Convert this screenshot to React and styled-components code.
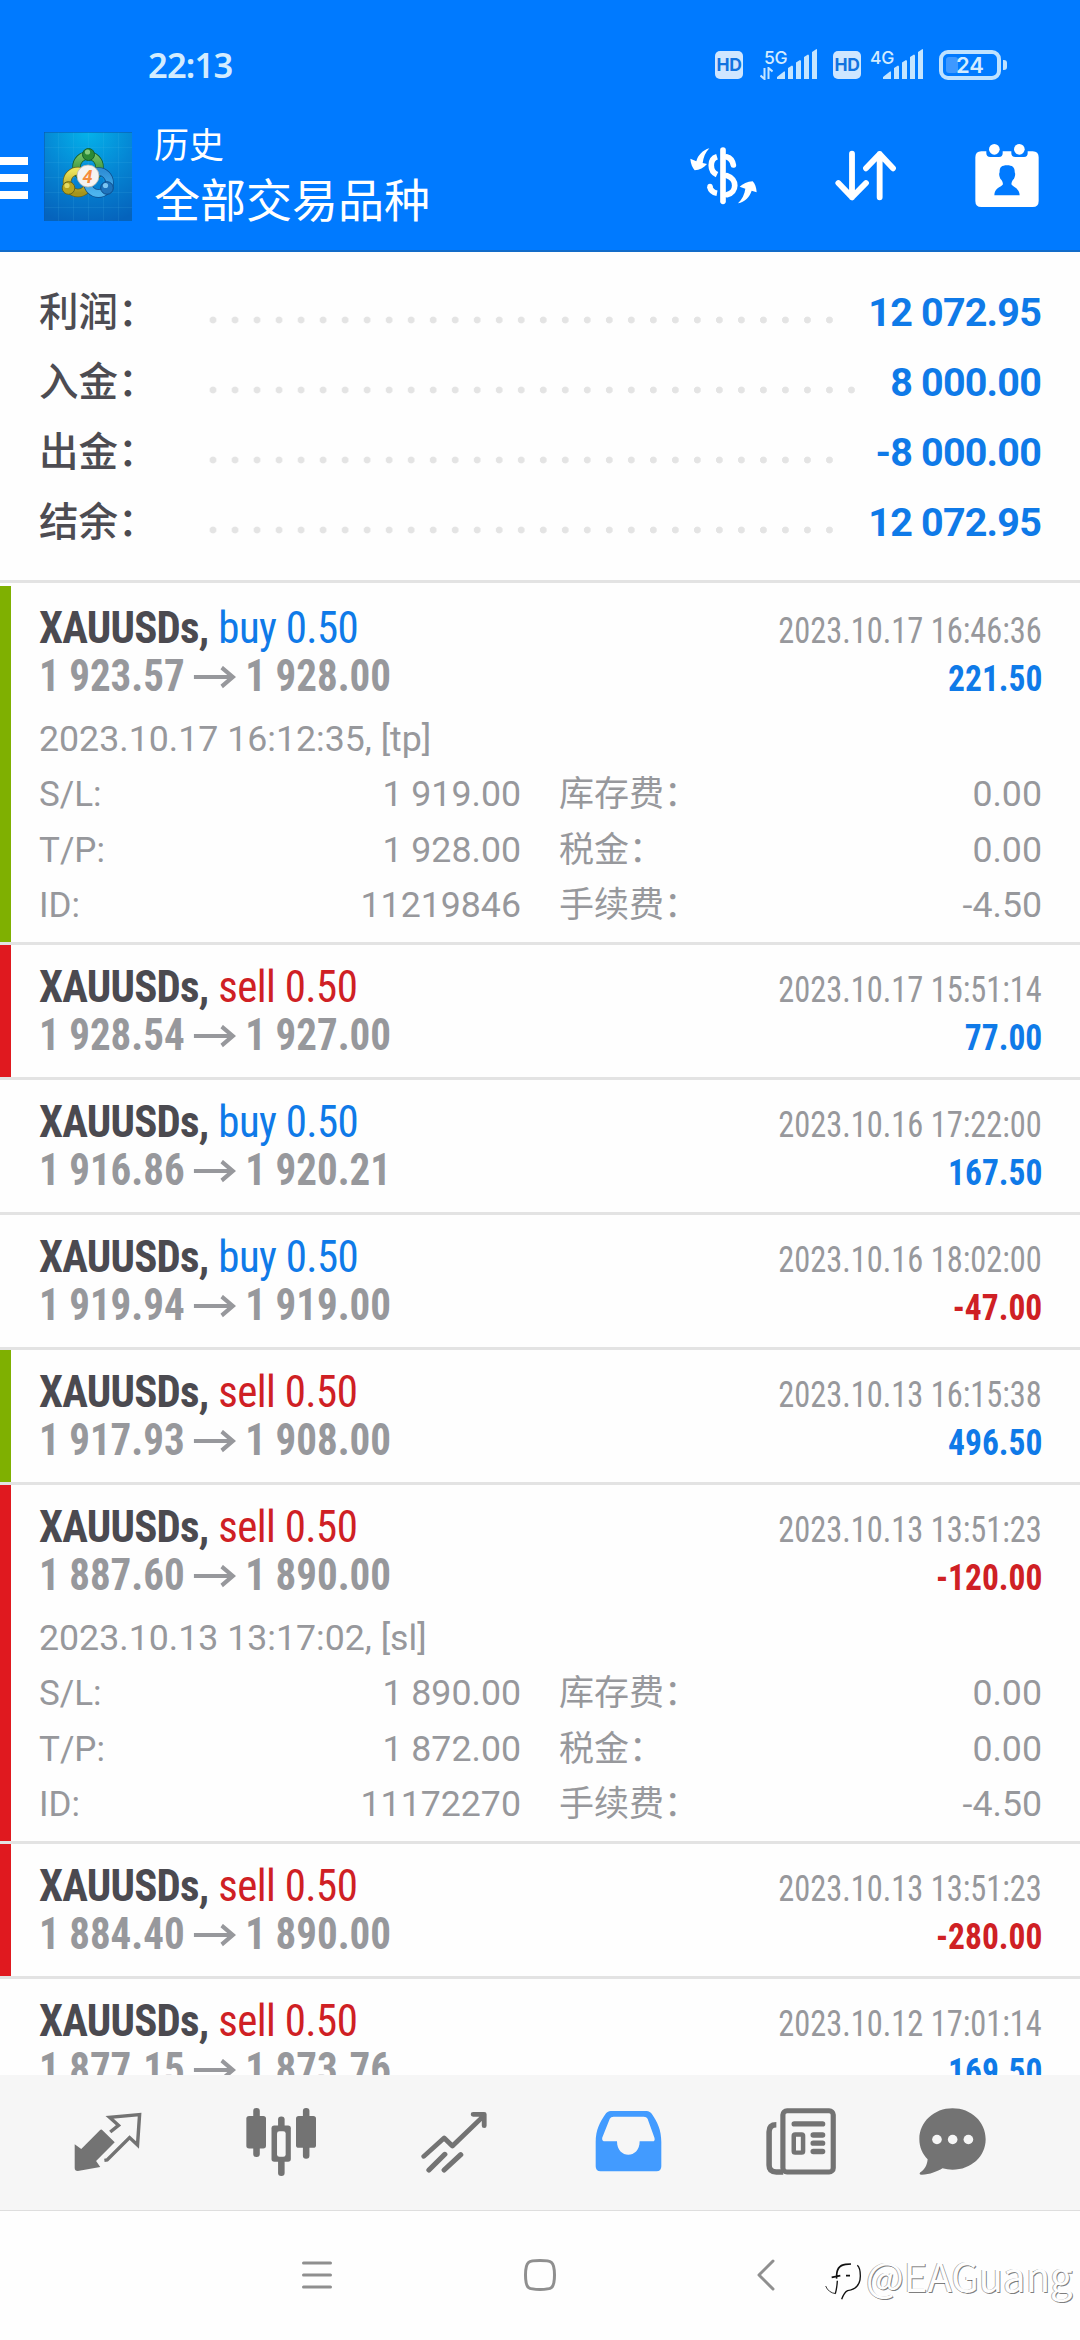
import React from "react";
import styled, { createGlobalStyle } from "styled-components";

const BLUE = "#0f7ae8";
const RED = "#cf2024";
const GREY = "#97989c";

const GlobalStyle = createGlobalStyle`
  *, *::before, *::after { box-sizing: border-box; }
  body {
    margin: 0;
    background: #fff;
    font-family: Roboto, "Noto Sans CJK SC", sans-serif;
  }
  svg { display: block; flex: none; }
`;

const Screen = styled.div`
  position: relative;
  display: flex;
  flex-direction: column;
  width: 1080px;
  height: 2340px;
  overflow: hidden;
  background: #fefefe;
`;

/* ---------- header ---------- */

const Header = styled.header`
  flex: none;
  height: 252px;
  background: #007aff;
  border-bottom: 2px solid #126cc9;
  color: #fff;
`;

const StatusBar = styled.div`
  display: flex;
  align-items: center;
  height: 102px;
  padding: 27px 73px 0 148px;
  color: #d3ecff;
`;

const Clock = styled.div`
  flex: 1;
  font: 600 34.5px/40px "Noto Sans", sans-serif;
  letter-spacing: -0.8px;
`;

const HdBadge = styled.div`
  display: grid;
  place-items: center;
  width: 28px;
  height: 28px;
  margin-right: ${(p) => p.$gap}px;
  border-radius: 5px;
  background: #cfe6ff;
  color: #1173e0;
  font: 700 17.5px/28px Inter, sans-serif;
  letter-spacing: -0.4px;
`;

const Signal = styled.div`
  display: flex;
  width: ${(p) => p.$width}px;
  height: 32px;
  margin-right: 15px;
`;

const SignalSide = styled.div`
  display: flex;
  flex-direction: column;
  flex: none;
  width: ${(p) => p.$width}px;
`;

const SignalLabel = styled.div`
  height: 18px;
  padding-left: ${(p) => p.$indent}px;
  font: 500 17.5px/17px Inter, sans-serif;
  letter-spacing: -0.3px;
  white-space: nowrap;
`;

const BatteryBody = styled.div`
  display: grid;
  place-items: center;
  position: relative;
  width: 62px;
  height: 30px;
  border: 4px solid #bfe2ff;
  border-radius: 9px;
  font: 600 22px/22px Inter, sans-serif;

  &::before {
    content: "";
    position: absolute;
    left: 3px;
    top: 3px;
    width: 12px;
    height: 16px;
    border-radius: 3px;
    background: #3f99ff;
  }

  span { position: relative; }
`;

const BatteryCap = styled.div`
  width: 4px;
  height: 10px;
  margin-left: 2px;
  border-radius: 0 3px 3px 0;
  background: #bfe2ff;
`;

const AppBar = styled.div`
  display: flex;
  align-items: center;
  height: 148px;
  padding-right: 41px;
`;

const MenuButton = styled.div`
  display: grid;
  gap: 9px;
  width: 28px;
  margin: 3px 16px 0 0;
`;

const MenuLine = styled.div`
  height: 8px;
  background: #fff;
`;

const Titles = styled.div`
  flex: 1;
  margin-left: 22px;
  padding-bottom: 7px;
  white-space: nowrap;
`;

const Title = styled.div`
  height: ${(p) => p.$line}px;
  font-family: "Noto Sans CJK SC", sans-serif;
  font-size: ${(p) => p.$size}px;
  line-height: ${(p) => p.$line}px;
`;

const Actions = styled.div`
  display: flex;
  align-items: center;
`;

const Action = styled.div`
  margin-left: ${(p) => p.$gap || 0}px;
`;

/* ---------- summary ---------- */

const Summary = styled.section`
  flex: none;
  height: 331px;
  padding: 26px 39px 0 39px;
  border-bottom: 3px solid #e3e3e3;
`;

const SummaryRow = styled.div`
  display: flex;
  align-items: baseline;
  height: 70px;
  font-size: 39.5px;
  line-height: 70px;
`;

const SummaryLabel = styled.div`
  width: 163px;
  color: #4d4c52;
  font-weight: 500;
  white-space: nowrap;
`;

const Leader = styled.div`
  flex: 1;
  align-self: stretch;
  margin-right: 15px;
`;

/* Only whole dots are shown: the strip is rounded down to the dot pitch. */
const Dots = styled.div`
  width: 100%;
  width: round(down, 100%, 22.02px);
  height: 70px;
  background: radial-gradient(circle at 11px 42px, #e4e4e4 3.1px, transparent 3.8px) 0 0 / 22.02px 70px repeat-x;
`;

const SummaryValue = styled.div`
  color: ${BLUE};
  font-weight: 700;
  letter-spacing: -0.8px;
`;

/* ---------- deals ---------- */

const Deals = styled.main`
  flex: 1 1 0;
  overflow: hidden;
  padding-top: 3px;
`;

const MARK = { green: "#7fb001", red: "#e0191f" };

const Deal = styled.article`
  display: grid;
  grid-template-columns: 11px 1fr;
  height: ${(p) => (p.$open ? 359 : 135)}px;
  border-bottom: 3px solid #e3e3e3;
`;

const DealMark = styled.div`
  background: ${(p) => MARK[p.$mark] || "transparent"};
`;

const DealBody = styled.div`
  padding: 18px 38px 0 28px;
`;

const DealLine = styled.div`
  display: flex;
  justify-content: space-between;
  align-items: baseline;
  height: 48px;
  font-family: "Roboto Condensed", Roboto, sans-serif;
  font-size: 44px;
  line-height: 48px;
  white-space: nowrap;
`;

const Instrument = styled.div`
  display: flex;
  gap: 10px;
  color: #4b4a50;
  font-weight: 700;
  letter-spacing: -0.8px;
  transform: scaleX(0.976);
  transform-origin: left;
`;

const Side = styled.span`
  color: ${(p) => (p.$side === "buy" ? BLUE : RED)};
  font-weight: 400;
  letter-spacing: -0.6px;
`;

const When = styled.div`
  color: ${GREY};
  font-size: 36px;
  transform: scaleX(0.9);
  transform-origin: right;
`;

const Prices = styled.div`
  display: flex;
  align-items: baseline;
  color: ${GREY};
  font-weight: 700;
  transform: scaleX(0.932);
  transform-origin: left;
`;

const Arrow = styled.svg`
  align-self: flex-start;
  margin: 14px 9px 0 10px;
`;

const Profit = styled.div`
  color: ${(p) => (p.$loss ? RED : BLUE)};
  font-size: 36px;
  font-weight: 700;
  transform: scaleX(0.93);
  transform-origin: right;
`;

const Details = styled.div`
  margin-top: 11.5px;
  color: ${GREY};
  font-size: 35.7px;
`;

const Note = styled.div`
  height: 55.67px;
  line-height: 55.67px;
`;

const DetailRow = styled.div`
  display: grid;
  grid-template-columns: 95px 387px 1fr auto;
  height: 55.67px;
  line-height: 55.67px;
  white-space: nowrap;
`;

const DetailLabel = styled.div`
  font-size: 35px;
`;

const FeeLabel = styled(DetailLabel)`
  padding-left: 38px;
`;

const DetailValue = styled.div`
  text-align: right;
`;

/* ---------- bottom ---------- */

const TabBar = styled.nav`
  flex: none;
  display: grid;
  grid-template-columns: 173.3px 173.3px 173.3px 173.3px 173.3px 130px;
  place-items: center;
  height: 136px;
  padding: 0 0 2px 21.5px;
  background: #f6f6f6;
  border-bottom: 1px solid #dedede;
`;

const SystemBar = styled.div`
  flex: none;
  display: grid;
  grid-template-columns: 224px 222px 230px;
  place-items: center;
  height: 129px;
  padding: 0 0 2px 205px;
`;

const Watermark = styled.div`
  position: absolute;
  left: 823px;
  top: 2255px;
  display: flex;
  align-items: flex-start;
  gap: 5px;
  color: #fefefe;
  font: 400 40px/48px "Noto Sans CJK SC", sans-serif;
  text-shadow: -1px -0.5px 0 rgba(0, 0, 0, 0.33), 1px 1px 0 rgba(0, 0, 0, 0.5);

  span { margin-top: -4px; }
  svg { margin-top: 3px; }
`;

/* ---------- icons ---------- */

const AppLogo = () => (
  <svg width="88" height="89" viewBox="0 0 88 89">
    <defs>
      <radialGradient id="sky" cx="0.5" cy="0" r="1.05">
        <stop offset="0" stopColor="#04b2ea" />
        <stop offset="0.5" stopColor="#0586d4" />
        <stop offset="1" stopColor="#0563bc" />
      </radialGradient>
      <linearGradient id="green" x2="0" y2="1">
        <stop offset="0" stopColor="#72c063" />
        <stop offset="1" stopColor="#23802f" />
      </linearGradient>
      <linearGradient id="gold" x2="0" y2="1">
        <stop offset="0" stopColor="#ece35c" />
        <stop offset="1" stopColor="#a5941c" />
      </linearGradient>
      <linearGradient id="aqua" x2="0" y2="1">
        <stop offset="0" stopColor="#2f8fd6" />
        <stop offset="1" stopColor="#4db4ee" />
      </linearGradient>
    </defs>
    <rect width="88" height="89" fill="url(#sky)" />
    <path d="M14.500 0V89M29.500 0V89M44.500 0V89M59.500 0V89M74.500 0V89M0 15.500H88M0 30.500H88M0 45.500H88M0 60.500H88M0 75.500H88" stroke="#5cc4f0" strokeOpacity="0.12" />
    <path d="M0 .5H88M.5 0V89" stroke="#0a5cb0" strokeOpacity="0.6" />
    <g fill="none">
      <circle cx="44" cy="35" r="11.5" stroke="#155e2a" strokeWidth="8.5" />
      <circle cx="44" cy="35" r="11.5" stroke="url(#green)" strokeWidth="7" />
      <circle cx="34" cy="50" r="11" stroke="#66641a" strokeWidth="8.5" />
      <circle cx="34" cy="50" r="11" stroke="url(#gold)" strokeWidth="7" />
      <circle cx="54.5" cy="50.5" r="11" stroke="#0e4d8c" strokeWidth="8.5" />
      <circle cx="54.5" cy="50.5" r="11" stroke="url(#aqua)" strokeWidth="7" />
    </g>
    <circle cx="44.5" cy="22.5" r="6" fill="#2b8a35" stroke="#155e2a" />
    <circle cx="43.5" cy="20" r="2.6" fill="#84cb7c" />
    <circle cx="24.5" cy="56" r="6.3" fill="#b7a41f" stroke="#66641a" />
    <circle cx="23" cy="53.5" r="2.6" fill="#e5da62" />
    <circle cx="63" cy="56" r="6.3" fill="#1e74bd" stroke="#0e4d8c" />
    <circle cx="61.5" cy="53.5" r="2.6" fill="#7cc6f2" />
    <circle cx="44" cy="44" r="11" fill="#f5f3f1" stroke="#b9b5ad" strokeWidth="0.8" />
    <text x="43.5" y="50.5" textAnchor="middle" fill="#f58c3c" fontFamily="Roboto" fontWeight="700" fontStyle="italic" fontSize="18">4</text>
  </svg>
);

const SignalBars = () => (
  <svg width="41" height="30" viewBox="0 0 41 30" fill="#c5e5ff">
    <path d="M0 30V28L7 22.5H8V30ZM11 30V19L15 16.500Q16 16.500 16 18V30ZM19 30V13.500L23 11Q24 11 24 12.500V30ZM27 30V8L31 5.500Q32 5.500 32 7V30ZM35 30V3L39.500 0Q40 0 40 1V30Z" />
  </svg>
);

const DataArrows = () => (
  <svg width="13" height="13" viewBox="0 0 13 13" fill="none" stroke="#c5e5ff" strokeWidth="2">
    <path d="M4.500 1V12L0.500 8.500M8.500 12V1L12.500 4.500" />
  </svg>
);

const CurrencyIcon = () => (
  <svg width="68" height="58" viewBox="26 52 204 174" fill="none" stroke="#fff" strokeLinecap="round">
    <path d="M125 61V215" strokeWidth="17" />
    <path d="M107 81C84 88 84 124 107 135M85 171C88 183 96 189 107 191" strokeWidth="17" strokeLinecap="butt" />
    <path d="M137 82Q152 86 156 106M137 138C168 148 168 188 137 195" strokeWidth="17" />
    <circle cx="86" cy="170" r="8" fill="#fff" stroke="none" />
    <path d="M84 56C64 62 50 76 45 95L27 87C28 103 34 115 40 122C54 121 68 114 77 103L64 100C66 84 72 68 84 56Z" fill="#fff" stroke="none" />
    <path d="M170 221C190 217 205 202 211 183L226 188C225 173 221 162 214 155C198 156 184 163 175 171L192 177C190 194 182 209 170 221Z" fill="#fff" stroke="none" />
  </svg>
);

const SortIcon = () => (
  <svg width="62" height="52" viewBox="583 391 186 156" fill="none" stroke="#fff" strokeWidth="17.500" strokeLinecap="round" strokeLinejoin="round">
    <path d="M634 402V533M593 490L634 533L676 490M717 533V403M676 446L717 403L757 446" />
  </svg>
);

const CalendarUserIcon = () => (
  <svg width="64" height="65" viewBox="1004 371 192 195">
    <path fill="#fff" fillRule="evenodd" d="M1023 393H1038V399Q1038 410 1050 410H1076Q1087 410 1087 399V393H1113V399Q1113 410 1125 410H1151Q1162 410 1162 399V393H1177Q1195 393 1195 411V542Q1195 560 1177 560H1023Q1005 560 1005 542V411Q1005 393 1023 393ZM1100 435C1083 435 1077 442 1078 456Q1075 460 1078 470Q1079 476 1084 480Q1088 486 1088 492C1080 502 1062 504 1062 525H1138C1138 504 1120 502 1113 492Q1113 486 1117 480Q1122 476 1123 470Q1126 460 1123 456C1124 442 1117 435 1100 435Z" />
    <circle cx="1062" cy="387" r="16" fill="#fff" />
    <circle cx="1137" cy="387" r="16" fill="#fff" />
  </svg>
);

const QuotesIcon = () => (
  <svg width="68" height="60" viewBox="217 157 197 180" preserveAspectRatio="none">
    <path fill="#737373" d="M298 210L335 248L281 304L293 322L228 334Q219 334 219 325V254L238 268L292 212Q295 208 298 210Z" />
    <path fill="none" stroke="#737373" strokeWidth="10" d="M322 217L346 197L320 173L407 165L401 256L378 234L313 301L305 302" />
  </svg>
);

const CandlesIcon = () => (
  <svg width="70" height="68" viewBox="714 144 203 205" preserveAspectRatio="none" fill="#737373">
    <rect x="735" y="144" width="19" height="148" rx="9" />
    <rect x="715" y="168" width="57" height="98" rx="8" />
    <rect x="879" y="144" width="19" height="153" rx="9" />
    <rect x="859" y="168" width="58" height="96" rx="8" />
    <rect x="807" y="170" width="19" height="179" rx="9" />
    <rect x="788" y="197" width="56" height="109" rx="8" />
    <rect x="804" y="214" width="25" height="77" rx="7" fill="#f6f6f6" />
  </svg>
);

const TrendIcon = () => (
  <svg width="67" height="62" viewBox="1222 150 194 186" preserveAspectRatio="none" fill="none" stroke="#737373" strokeWidth="14" strokeLinecap="round" strokeLinejoin="round">
    <path d="M1230 286L1289 231L1313 255L1402 166M1373 160H1405V194" />
    <path d="M1245 327L1291 280M1289 327L1337 281" strokeWidth="15" />
  </svg>
);

const InboxIcon = () => (
  <svg width="67" height="62" viewBox="157 152 195 186" preserveAspectRatio="none">
    <path fill="#429bff" fillRule="evenodd" d="M203 152H307Q317 152 324 163C338 184 350 208 350 245V318Q350 333 336 333H173Q159 333 159 318V245C159 208 172 184 186 163Q193 152 203 152ZM211 169Q203 169 200 175L178 232Q176 243 187 243H221C221 297 287 297 287 243H324Q333 243 330 232L310 175Q307 169 299 169Z" />
  </svg>
);

const NewsIcon = () => (
  <svg width="70" height="67" viewBox="656 143 203 200" preserveAspectRatio="none">
    <g fill="none" stroke="#737373" strokeLinejoin="round">
      <rect x="705" y="151.500" width="146" height="182.500" rx="12" strokeWidth="15" />
      <path d="M686 193Q665 193 665 214V314Q665 334 686 334H706" strokeWidth="16" />
      <rect x="736.500" y="222" width="27" height="54" rx="4" strokeWidth="13" />
      <path d="M738 190.500H820M793 223.500H820M793 248H820M793 273H820" strokeWidth="16" strokeLinecap="round" />
    </g>
  </svg>
);

const ChatIcon = () => (
  <svg width="67" height="67" viewBox="1102 143 194 200" preserveAspectRatio="none">
    <path fill="#737373" d="M1199 144C1253 144 1295 184 1295 236C1295 287 1253 327 1199 327Q1184 327 1170 323C1156 332 1133 342 1110 342Q1100 342 1106 335C1118 327 1126 313 1127 296C1112 280 1103 260 1103 236C1103 184 1146 144 1199 144Z" />
    <circle cx="1154" cy="237" r="14" fill="#f6f6f6" />
    <circle cx="1199.500" cy="237" r="14" fill="#f6f6f6" />
    <circle cx="1245" cy="237" r="14" fill="#f6f6f6" />
  </svg>
);

const RecentsIcon = () => (
  <svg width="30" height="28" viewBox="0 0 30 28" stroke="#8f8f8f" strokeWidth="3" strokeLinecap="round">
    <path d="M1.500 2H28.500M1.500 14H28.500M1.500 26H28.500" />
  </svg>
);

const HomeIcon = () => (
  <svg width="32" height="32" viewBox="0 0 32 32" fill="none" stroke="#8f8f8f" strokeWidth="3">
    <path d="M16 1.500C27 1.500 30.500 1.500 30.500 16C30.500 30.500 27 30.500 16 30.500C5 30.500 1.500 30.500 1.500 16C1.500 1.500 5 1.500 16 1.500Z" />
  </svg>
);

const BackIcon = () => (
  <svg width="18" height="32" viewBox="0 0 18 32" fill="none" stroke="#8f8f8f" strokeWidth="3" strokeLinecap="round" strokeLinejoin="round">
    <path d="M16 2L2 16L16 30" />
  </svg>
);

const WatermarkIcon = () => (
  <svg width="38" height="46" viewBox="24 66 114 138" fill="none" stroke="#111">
    <path strokeWidth="5" d="M65 128Q62 88 92 85L108 84M50 124L76 119M93 119H105" />
    <path strokeWidth="4" d="M127 88Q136 96 136 120C136 146 124 160 98 164Q88 168 80 190M67 134Q66 155 61 173" />
    <path strokeWidth="2.500" d="M32 150Q40 170 62 173" />
  </svg>
);

/* ---------- data ---------- */

const summary = [
  ["利润", "12 072.95"],
  ["入金", "8 000.00"],
  ["出金", "-8 000.00"],
  ["结余", "12 072.95"],
];

const deals = [
  {
    side: "buy", from: "1 923.57", to: "1 928.00", when: "2023.10.17 16:46:36", profit: "221.50", mark: "green",
    details: { note: "2023.10.17 16:12:35, [tp]", sl: "1 919.00", tp: "1 928.00", id: "11219846" },
  },
  { side: "sell", from: "1 928.54", to: "1 927.00", when: "2023.10.17 15:51:14", profit: "77.00", mark: "red" },
  { side: "buy", from: "1 916.86", to: "1 920.21", when: "2023.10.16 17:22:00", profit: "167.50" },
  { side: "buy", from: "1 919.94", to: "1 919.00", when: "2023.10.16 18:02:00", profit: "-47.00" },
  { side: "sell", from: "1 917.93", to: "1 908.00", when: "2023.10.13 16:15:38", profit: "496.50", mark: "green" },
  {
    side: "sell", from: "1 887.60", to: "1 890.00", when: "2023.10.13 13:51:23", profit: "-120.00", mark: "red",
    details: { note: "2023.10.13 13:17:02, [sl]", sl: "1 890.00", tp: "1 872.00", id: "11172270" },
  },
  { side: "sell", from: "1 884.40", to: "1 890.00", when: "2023.10.13 13:51:23", profit: "-280.00", mark: "red" },
  { side: "sell", from: "1 877.15", to: "1 873.76", when: "2023.10.12 17:01:14", profit: "169.50" },
];

function DealDetails({ note, sl, tp, id }) {
  const rows = [
    ["S/L:", sl, "库存费：", "0.00"],
    ["T/P:", tp, "税金：", "0.00"],
    ["ID:", id, "手续费：", "-4.50"],
  ];
  return (
    <Details>
      <Note>{note}</Note>
      {rows.map(([label, value, feeLabel, fee]) => (
        <DetailRow key={label}>
          <DetailLabel>{label}</DetailLabel>
          <DetailValue>{value}</DetailValue>
          <FeeLabel>{feeLabel}</FeeLabel>
          <DetailValue>{fee}</DetailValue>
        </DetailRow>
      ))}
    </Details>
  );
}

function DealItem({ deal }) {
  return (
    <Deal $open={Boolean(deal.details)}>
      <DealMark $mark={deal.mark} />
      <DealBody>
        <DealLine>
          <Instrument>
            XAUUSDs,<Side $side={deal.side}>{deal.side} 0.50</Side>
          </Instrument>
          <When>{deal.when}</When>
        </DealLine>
        <DealLine>
          <Prices>
            {deal.from}
            <Arrow width="46" height="24" viewBox="0 0 46 24" fill="none" stroke={GREY} strokeWidth="4.2">
              <path d="M0 11H42M30 1.500L42 11L30 20.500" />
            </Arrow>
            {deal.to}
          </Prices>
          <Profit $loss={deal.profit.startsWith("-")}>{deal.profit}</Profit>
        </DealLine>
        {deal.details && <DealDetails {...deal.details} />}
      </DealBody>
    </Deal>
  );
}

export default function App() {
  return (
    <Screen>
      <GlobalStyle />
      <Header>
        <StatusBar>
          <Clock>22:13</Clock>
          <HdBadge $gap={17}>HD</HdBadge>
          <Signal $width={58}>
            <SignalSide $width={17}>
              <SignalLabel $indent={4}>5G</SignalLabel>
              <DataArrows />
            </SignalSide>
            <SignalBars />
          </Signal>
          <HdBadge $gap={9}>HD</HdBadge>
          <Signal $width={54}>
            <SignalSide $width={13}>
              <SignalLabel $indent={0}>4G</SignalLabel>
            </SignalSide>
            <SignalBars />
          </Signal>
          <BatteryBody><span>24</span></BatteryBody>
          <BatteryCap />
        </StatusBar>
        <AppBar>
          <MenuButton><MenuLine /><MenuLine /><MenuLine /></MenuButton>
          <AppLogo />
          <Titles>
            <Title $size={35} $line={49}>历史</Title>
            <Title $size={46} $line={60}>全部交易品种</Title>
          </Titles>
          <Actions>
            <Action><CurrencyIcon /></Action>
            <Action $gap={77}><SortIcon /></Action>
            <Action $gap={78}><CalendarUserIcon /></Action>
          </Actions>
        </AppBar>
      </Header>

      <Summary>
        {summary.map(([label, value]) => (
          <SummaryRow key={label}>
            <SummaryLabel>{label}：</SummaryLabel>
            <Leader><Dots /></Leader>
            <SummaryValue>{value}</SummaryValue>
          </SummaryRow>
        ))}
      </Summary>

      <Deals>
        {deals.map((deal) => (
          <DealItem key={deal.from} deal={deal} />
        ))}
      </Deals>

      <TabBar>
        <QuotesIcon />
        <CandlesIcon />
        <TrendIcon />
        <InboxIcon />
        <NewsIcon />
        <ChatIcon />
      </TabBar>
      <SystemBar>
        <RecentsIcon />
        <HomeIcon />
        <BackIcon />
      </SystemBar>
      <Watermark>
        <WatermarkIcon />
        <span>@EAGuang</span>
      </Watermark>
    </Screen>
  );
}
